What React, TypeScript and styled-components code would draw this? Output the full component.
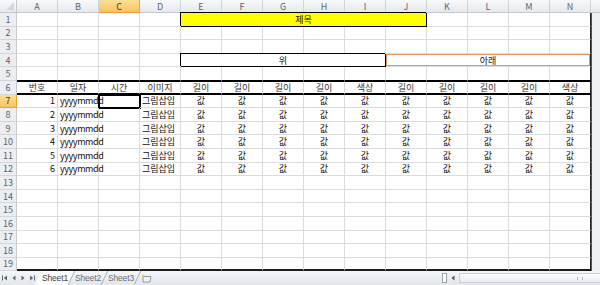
import React from 'react';
import styled, { createGlobalStyle, css } from 'styled-components';

const GlobalStyle = createGlobalStyle`
  html, body { margin: 0; padding: 0; background: #fff; overflow: hidden; }
  body { font-family: "Noto Sans CJK KR", "Noto Sans", sans-serif; }
`;

const COLS = ['A', 'B', 'C', 'D', 'E', 'F', 'G', 'H', 'I', 'J', 'K', 'L', 'M', 'N'];
const SELECTED_COL = 'C';
const SELECTED_ROW = 7;

type Kind = 'plain' | 'title' | 'upper' | 'lower' | 'above' | 'head' | 'bottom';
type Align = 'left' | 'center' | 'right';
interface Spec {
  text?: string;
  span?: number;
  align?: Align;
  kind?: Kind;
  sel?: boolean;
}

const GRID = '#dadcdd';

const Window = styled.div`
  width: 600px;
  height: 285px;
  display: flex;
  flex-direction: column;
  overflow: hidden;
  background: #fff;
`;

const Grid = styled.div`
  display: grid;
  grid-template-columns: 17px repeat(14, 41px) 1fr;
  grid-template-rows: 13px repeat(19, 13.6px);
  flex: none;
`;

const headerBg = css`
  background: linear-gradient(#f8f9fb, #e6e9ed);
`;
const selectedBg = css`
  background: linear-gradient(#fbdf98, #f6c55c);
`;

const Corner = styled.div`
  ${headerBg};
  box-sizing: border-box;
  border-right: 1px solid #c5c9cf;
  border-bottom: 1px solid #c5c9cf;
  display: flex;
  align-items: flex-end;
  justify-content: flex-end;
  padding: 0 2px 2px 0;
`;

const ColHeader = styled.div<{ $selected?: boolean }>`
  ${(p) => (p.$selected ? selectedBg : headerBg)};
  box-sizing: border-box;
  border-right: 1px solid ${(p) => (p.$selected ? '#e3a44d' : '#d0d4d9')};
  border-bottom: 1px solid ${(p) => (p.$selected ? '#f29a3c' : '#c5c9cf')};
  display: flex;
  align-items: center;
  justify-content: center;
  font-size: 9px;
  color: ${(p) => (p.$selected ? '#3a3a3a' : '#5b6570')};
`;

const HeaderFill = styled.div`
  ${headerBg};
  border-bottom: 1px solid #c5c9cf;
  box-sizing: border-box;
`;

const RowHeader = styled.div<{ $selected?: boolean }>`
  ${(p) => (p.$selected ? selectedBg : css`background: #eceef1;`)};
  box-sizing: border-box;
  border-right: 1px solid ${(p) => (p.$selected ? '#f29a3c' : '#c5c9cf')};
  border-bottom: 1px solid ${(p) => (p.$selected ? '#e3a44d' : '#d3d7dc')};
  display: flex;
  align-items: center;
  justify-content: center;
  font-size: 9px;
  color: ${(p) => (p.$selected ? '#3a3a3a' : '#5b6570')};
`;

const kindStyles: Record<Kind, ReturnType<typeof css>> = {
  plain: css``,
  title: css`
    background: #ffff00;
    border-right-color: #000;
    border-bottom-color: #000;
    box-shadow: -1px -1px 0 0 #000;
  `,
  upper: css`
    border-right-color: #000;
    border-bottom-color: #000;
    box-shadow: -1px -1px 0 0 #000;
  `,
  lower: css`
    box-shadow: inset 1px 1px 0 0 #e59a58, inset -1px -1px 0 0 #e59a58;
  `,
  above: css`
    border-bottom-color: #000;
  `,
  head: css`
    border-top: 1px solid #000;
    border-bottom: 2px solid #000;
    color: #333;
  `,
  bottom: css`
    border-bottom: 2px solid #1c1c1c;
  `,
};

const Cell = styled.div<{ $span: number; $align: Align; $kind: Kind; $last: boolean; $sel: boolean }>`
  grid-column: span ${(p) => p.$span};
  box-sizing: border-box;
  min-width: 0;
  border-right: 1px solid ${GRID};
  border-bottom: 1px solid ${GRID};
  display: flex;
  align-items: center;
  justify-content: ${(p) => (p.$align === 'left' ? 'flex-start' : p.$align === 'right' ? 'flex-end' : 'center')};
  padding: 0 2px;
  font-size: 9px;
  line-height: 1;
  color: #111;
  white-space: nowrap;
  overflow: visible;
  ${(p) => kindStyles[p.$kind]};
  ${(p) =>
    p.$last &&
    css`
      border-right: 1px solid #222;
    `};
  ${(p) =>
    p.$sel &&
    css`
      outline: 2px solid #000;
      outline-offset: -1px;
    `};
`;

const Latin = styled.span`
  letter-spacing: -0.4px;
`;

const Filler = styled.div`
  background: #f0f1f3;
  border-left: 1px solid #555;
`;

/* ---------- data ---------- */

const empty = (n: number, kind: Kind = 'plain'): Spec[] => Array.from({ length: n }, () => ({ kind }));

const buildRows = (): Spec[][] => {
  const rows: Spec[][] = [];
  rows.push([...empty(4), { text: '제목', span: 6, kind: 'title' }, ...empty(4)]);
  rows.push(empty(14));
  rows.push(empty(14));
  rows.push([...empty(4), { text: '위', span: 5, kind: 'upper' }, { text: '아래', span: 5, kind: 'lower' }]);
  rows.push(empty(14, 'above'));
  const heads = ['번호', '일자', '시간', '이미지', '길이', '길이', '길이', '길이', '색상', '길이', '길이', '길이', '길이', '색상'];
  rows.push(heads.map((t) => ({ text: t, kind: 'head' as Kind })));
  for (let i = 1; i <= 6; i++) {
    rows.push([
      { text: String(i), align: 'right' },
      { text: 'yyyymmdd', align: 'left' },
      { sel: i === 1 },
      { text: '그림삽입', align: 'left' },
      ...Array.from({ length: 10 }, () => ({ text: '값' })),
    ]);
  }
  for (let r = 13; r <= 18; r++) rows.push(empty(14));
  rows.push(empty(14, 'bottom'));
  return rows;
};

const ROWS = buildRows();

/* ---------- tab bar ---------- */

const TabBar = styled.div`
  flex: 1;
  display: flex;
  align-items: stretch;
  background: linear-gradient(#f4f6f9, #e2e6eb);
  font-family: "Liberation Sans", Arial, sans-serif;
`;

const NavGroup = styled.div`
  display: flex;
  align-items: center;
  gap: 3px;
  padding-left: 2px;
  width: 36px;
  box-sizing: border-box;
`;

const NavIcon = styled.svg`
  width: 6px;
  height: 6px;
  fill: #5e6670;
`;

const Tabs = styled.div`
  display: flex;
  align-items: stretch;
  padding-left: 2px;
`;

const Tab = styled.div<{ $active?: boolean }>`
  display: flex;
  align-items: center;
  padding: 0 3px 0 4px;
  margin-right: -1px;
  transform: skewX(-25deg);
  background: ${(p) => (p.$active ? '#fbfcfd' : 'transparent')};
  border-right: 1px solid #a3adb9;
`;

const TabLabel = styled.span<{ $active?: boolean }>`
  transform: skewX(25deg);
  font-size: 8.5px;
  color: ${(p) => (p.$active ? '#444' : '#6a6f76')};
  letter-spacing: -0.15px;
`;

const NewSheet = styled.div`
  display: flex;
  align-items: center;
  padding-left: 3px;
`;

const Spacer = styled.div`
  flex: 1;
`;

const ScrollArea = styled.div`
  width: 158px;
  display: flex;
  align-items: center;
  gap: 3px;
`;

const Splitter = styled.div`
  width: 3px;
  height: 8px;
  background: #fff;
  border: 1px solid #9aa3ad;
`;

const ArrowBtn = styled.svg`
  width: 6px;
  height: 6px;
  fill: #4e5660;
`;

const Track = styled.div`
  flex: 1;
  height: 10px;
  box-sizing: border-box;
  border: 1px solid #c9cfd6;
  border-right: none;
  border-radius: 2px 0 0 2px;
  background: linear-gradient(#fbfcfd, #e8ecf0);
  display: flex;
  align-items: center;
  justify-content: flex-end;
  padding-right: 17px;
`;

const Grip = styled.div`
  width: 4px;
  height: 3px;
  border-left: 1px solid #b5bcc5;
  border-right: 1px solid #b5bcc5;
`;

const First = () => (
  <NavIcon viewBox="0 0 6 6">
    <rect x="0" y="0.5" width="1" height="5" />
    <path d="M5 0.5 L1.8 3 L5 5.5 Z" />
  </NavIcon>
);
const Prev = () => (
  <NavIcon viewBox="0 0 6 6">
    <path d="M4.5 0.5 L1.5 3 L4.5 5.5 Z" />
  </NavIcon>
);
const Next = () => (
  <NavIcon viewBox="0 0 6 6">
    <path d="M1.5 0.5 L4.5 3 L1.5 5.5 Z" />
  </NavIcon>
);
const Last = () => (
  <NavIcon viewBox="0 0 6 6">
    <path d="M1 0.5 L4.2 3 L1 5.5 Z" />
    <rect x="5" y="0.5" width="1" height="5" />
  </NavIcon>
);

const NewSheetIcon = () => (
  <svg width="12" height="10" viewBox="0 0 12 10">
    <path d="M3 3.5 H11 L10 9 H3 Z" fill="#eef2f6" stroke="#7c8794" strokeWidth="0.8" />
    <path d="M3 1 L3.6 2.4 L5 2.5 L3.9 3.3 L4.3 4.7 L3 3.9 L1.7 4.7 L2.1 3.3 L1 2.5 L2.4 2.4 Z" fill="#f2c02e" />
  </svg>
);

const TabStrip = () => (
  <TabBar>
    <NavGroup>
      <First />
      <Prev />
      <Next />
      <Last />
    </NavGroup>
    <Tabs>
      {['Sheet1', 'Sheet2', 'Sheet3'].map((s, i) => (
        <Tab key={s} $active={i === 0}>
          <TabLabel $active={i === 0}>{s}</TabLabel>
        </Tab>
      ))}
    </Tabs>
    <NewSheet>
      <NewSheetIcon />
    </NewSheet>
    <Spacer />
    <ScrollArea>
      <Splitter />
      <ArrowBtn viewBox="0 0 6 6">
        <path d="M4.5 0.5 L1.5 3 L4.5 5.5 Z" />
      </ArrowBtn>
      <Track>
        <Grip />
      </Track>
    </ScrollArea>
  </TabBar>
);

const CornerMark = () => (
  <svg width="8" height="8" viewBox="0 0 8 8">
    <path d="M8 0 L8 8 L0 8 Z" fill="#d3d7dc" />
  </svg>
);

export default function App() {
  return (
    <Window>
      <GlobalStyle />
      <Grid>
        <Corner>
          <CornerMark />
        </Corner>
        {COLS.map((c) => (
          <ColHeader key={c} $selected={c === SELECTED_COL}>
            {c}
          </ColHeader>
        ))}
        <HeaderFill />
        {ROWS.map((row, ri) => {
          const rowNo = ri + 1;
          let col = 0;
          return (
            <React.Fragment key={rowNo}>
              <RowHeader $selected={rowNo === SELECTED_ROW}>{rowNo}</RowHeader>
              {row.map((spec, ci) => {
                const span = spec.span ?? 1;
                col += span;
                const isLatin = spec.text === 'yyyymmdd';
                return (
                  <Cell
                    key={ci}
                    $span={span}
                    $align={spec.align ?? 'center'}
                    $kind={spec.kind ?? 'plain'}
                    $last={col === 14}
                    $sel={!!spec.sel}
                  >
                    {isLatin ? <Latin>{spec.text}</Latin> : spec.text}
                  </Cell>
                );
              })}
              <Filler />
            </React.Fragment>
          );
        })}
      </Grid>
      <TabStrip />
    </Window>
  );
}
